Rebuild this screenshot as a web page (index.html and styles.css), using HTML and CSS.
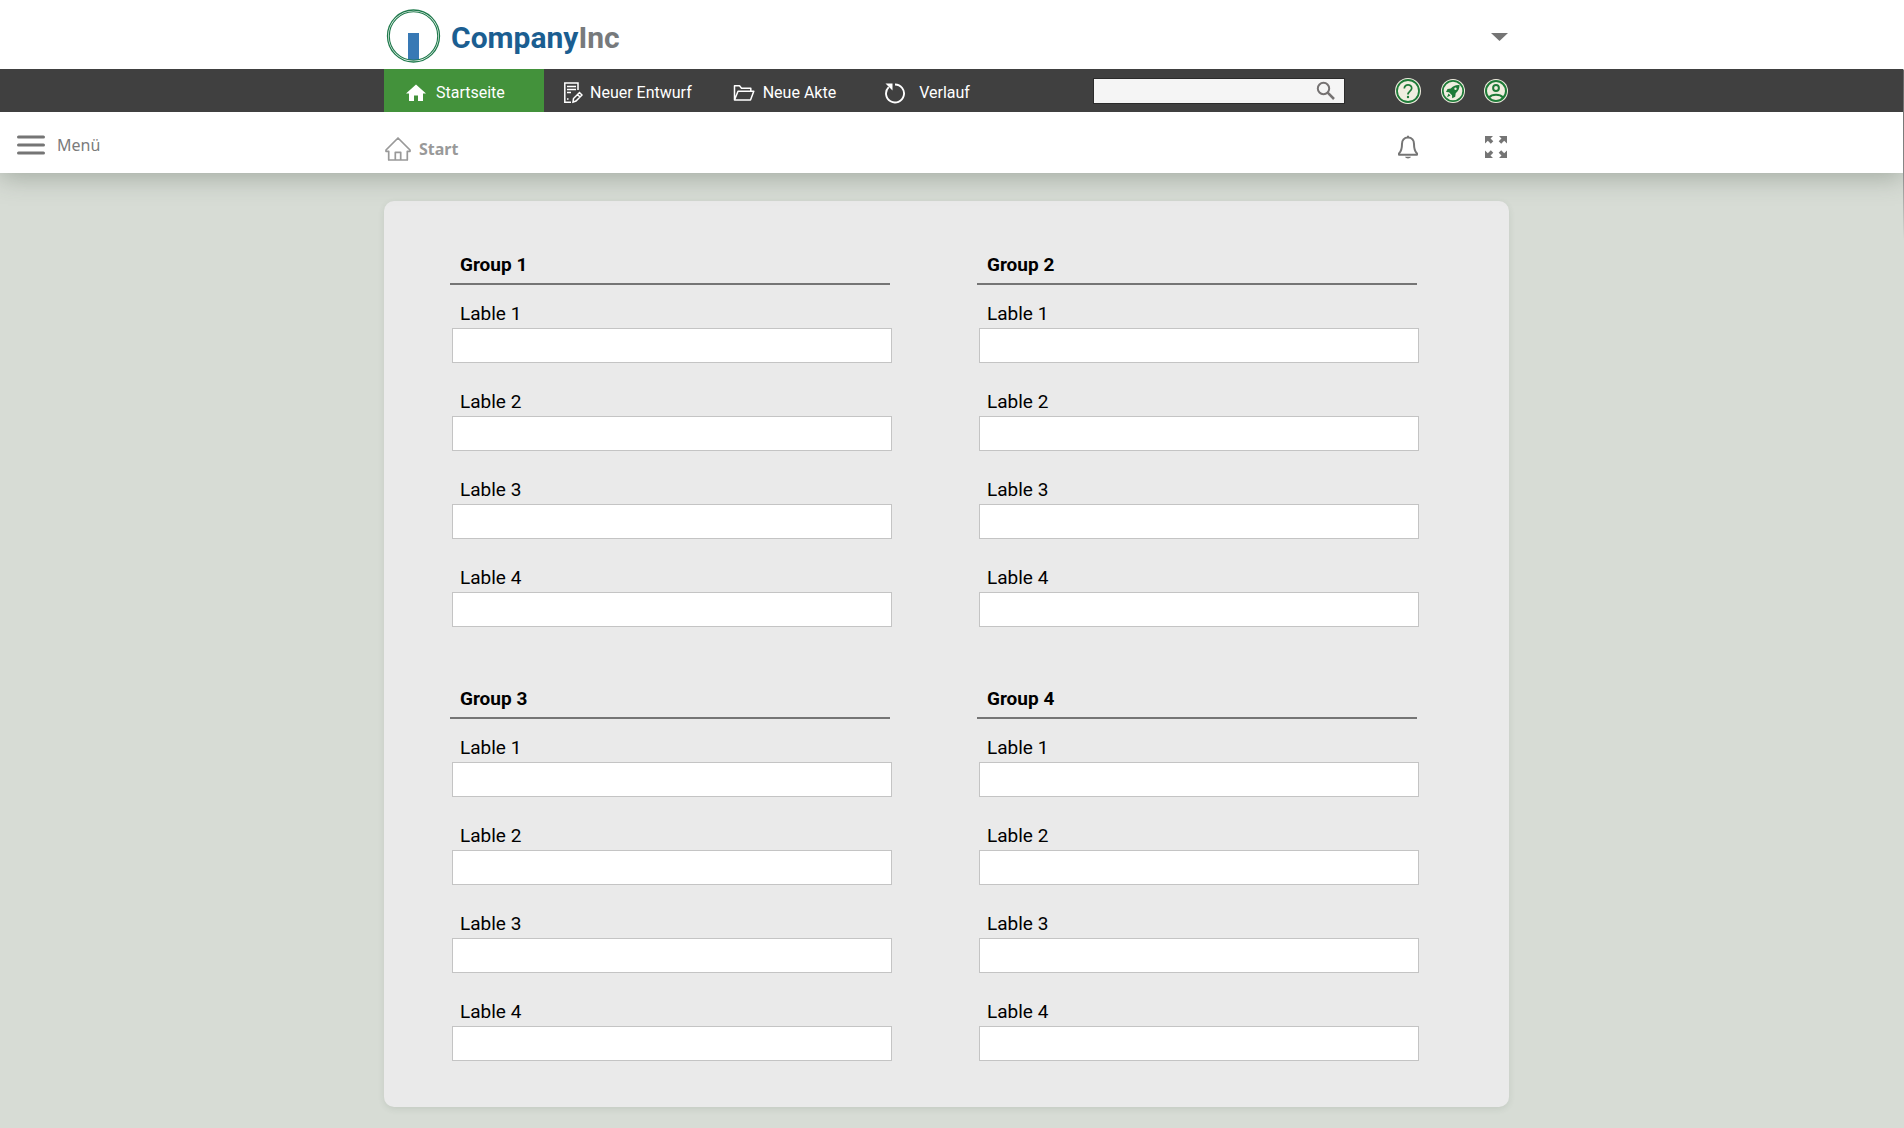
FILE: index.html
```html
<!DOCTYPE html>
<html lang="de">
<head>
<meta charset="utf-8">
<meta name="viewport" content="width=device-width, initial-scale=1">
<title>CompanyInc</title>
<link rel="stylesheet" href="styles.css">
</head>
<body>
<div class="page">
  <header class="head">
    <div class="frame brand-row">
      <div class="content brand-bar">
        <a class="brand" href="#">
          <svg class="logo" width="56" height="56" viewBox="0 0 56 56" aria-hidden="true">
            <rect x="23" y="25" width="11" height="27" fill="#3879b5"/>
            <circle cx="28.500" cy="28" r="26" fill="none" stroke="#1f7a4c" stroke-width="1.3"/>
            <circle cx="28.500" cy="28" r="24.2" fill="none" stroke="#1f7a4c" stroke-width="1.1"/>
          </svg>
          <span class="brand-name">Company<span class="brand-suffix">Inc</span></span>
        </a>
        <button class="icon-button" type="button" aria-label="Kopfbereich einklappen">
          <svg width="24" height="12" viewBox="0 0 24 12"><path d="M6 3h17l-8.500 8z" fill="#757575"/></svg>
        </button>
      </div>
    </div>

    <div class="frame nav-row">
      <div class="content nav-bar">
        <nav class="nav" aria-label="Hauptnavigation">
          <a class="nav-link active" href="#">
            <svg width="20" height="18" viewBox="0 0 20 18"><path d="M10 0.500L0 9.500h3V17h5v-5.500h4V17h5V9.500h3z" fill="#fff"/></svg>
            Startseite
          </a>
          <a class="nav-link draft" href="#">
            <svg width="20" height="22" viewBox="0 0 20 22" fill="none" stroke="#fff" stroke-width="1.500"><path d="M15 8V1H1.800v19.200H8M4 4.500h9M4 7.500h9M4 10.500h4M4 17h1.500M10 20.200l.5-3.700 6-6 2.500 2.500-6 6zM14.500 12.500l2.500 2.500"/></svg>
            Neuer Entwurf
          </a>
          <a class="nav-link file" href="#">
            <svg width="22" height="18" viewBox="0 0 22 18" fill="none" stroke="#fff" stroke-width="1.500" stroke-linejoin="round"><path d="M1.500 16V1.800h5l2 2.500h9.300v3M1.500 16L5 7.300h15.800L17.500 16z"/></svg>
            Neue Akte
          </a>
          <a class="nav-link history" href="#">
            <svg width="22" height="22" viewBox="0 0 22 22"><path d="M11 2.500a9 9 0 1 1-6.300 2.600" fill="none" stroke="#fff" stroke-width="1.900"/><path d="M1.500 1.500h7v7z" fill="#fff"/></svg>
            Verlauf
          </a>
        </nav>
        <form class="search" role="search">
          <input class="search-input" type="search" aria-label="Suche">
          <button class="icon-button" type="submit" aria-label="Suchen">
            <svg width="20" height="20" viewBox="0 0 20 20" fill="none" stroke="#757272"><circle cx="7.500" cy="7.500" r="5.700" stroke-width="2"/><path d="M11.700 11.700L18 18" stroke-width="2.500"/></svg>
          </button>
        </form>
        <div class="tools">
          <button class="icon-button" type="button" aria-label="Hilfe">
            <svg width="26" height="26" viewBox="0 0 26 26"><circle cx="13" cy="13" r="13" fill="#f0eee0"/><g fill="none" stroke="#1e7b38"><circle cx="13" cy="13" r="11" stroke-width="1.800"/><path d="M9.300 10.500c0-5 7.600-4.600 7.400-.3 0 2.800-3.700 3-3.700 6.300" stroke-width="1.700"/></g><circle cx="13" cy="19" r="1.200" fill="#1e7b38"/></svg>
          </button>
          <button class="icon-button" type="button" aria-label="Schnellstart">
            <svg width="24" height="24" viewBox="0 0 24 24"><circle cx="12" cy="12" r="12" fill="#f0eee0"/><circle cx="12" cy="12" r="10.200" fill="none" stroke="#1e7b38" stroke-width="1.700"/><path fill="#1e7b38" fill-rule="evenodd" d="M18.500 6c-4-.3-6.500 1-8.700 3.600L6.500 10 5 13l3 .2 3 3 .2 3 3-1.500.5-3.500C17.300 12 18.500 9.700 18.500 6zM14.500 8.600a1.200 1.200 0 1 1 0 2.400 1.200 1.200 0 0 1 0-2.400zM7.500 14.500l2 2-3.500 1.700z"/></svg>
          </button>
          <button class="icon-button" type="button" aria-label="Benutzerkonto">
            <svg width="24" height="24" viewBox="0 0 24 24"><circle cx="12" cy="12" r="12" fill="#f0eee0"/><g fill="none" stroke="#1e7b38" stroke-width="2"><circle cx="12" cy="12" r="10"/><circle cx="12" cy="9" r="2.900"/><path d="M5 18.500c3-3.700 11-3.700 14 0"/></g></svg>
          </button>
        </div>
      </div>
    </div>

    <div class="frame crumb-row">
      <button class="menu-button" type="button">
        <svg width="28" height="20" viewBox="0 0 28 20" stroke="#757575" stroke-width="3" stroke-linecap="round"><path d="M1.500 2h25M1.500 10h25M1.500 18h25"/></svg>
        Menü
      </button>
      <div class="content crumb-bar">
        <a class="crumb" href="#">
          <svg width="28" height="26" viewBox="0 0 28 26" fill="none" stroke="#999" stroke-width="1.700" stroke-linejoin="round"><path d="M14 2L2 14v1.300h2.700V24h18.600v-8.700H26V14zM11.300 24v-7.700h5.400V24"/></svg>
          Start
        </a>
        <div class="tools">
          <button class="icon-button" type="button" aria-label="Benachrichtigungen">
            <svg width="26" height="24" viewBox="-2 0 26 24"><path d="M11 2.500c-4 0-6 3-6 6.500 0 5-.3 7-3 9.500v1.200h18v-1.200c-2.700-2.500-3-4.500-3-9.500 0-3.500-2-6.500-6-6.500z" fill="none" stroke="#757575" stroke-width="2" stroke-linejoin="round"/><path d="M10 .8h2v2h-2zM8 21.800h6c-.8 2.200-5.200 2.200-6 0z" fill="#757575"/></svg>
          </button>
          <button class="icon-button" type="button" aria-label="Vollbild">
            <svg width="24" height="24" viewBox="0 0 24 24" fill="#757575"><path id="corner" d="M1 1h8L6.500 3.500 9.300 6.300 6.800 8.800 3.800 5.800 1 8.500z"/><use href="#corner" transform="matrix(-1 0 0 1 24 0)"/><use href="#corner" transform="matrix(1 0 0 -1 0 24)"/><use href="#corner" transform="matrix(-1 0 0 -1 24 24)"/></svg>
          </button>
        </div>
      </div>
    </div>
  </header>

  <main class="frame main">
    <form class="content panel">
      <section class="group">
        <h2 class="group-title">Group 1</h2>
        <div class="field"><label for="g1f1">Lable 1</label><input id="g1f1" type="text"></div>
        <div class="field"><label for="g1f2">Lable 2</label><input id="g1f2" type="text"></div>
        <div class="field"><label for="g1f3">Lable 3</label><input id="g1f3" type="text"></div>
        <div class="field"><label for="g1f4">Lable 4</label><input id="g1f4" type="text"></div>
      </section>
      <section class="group">
        <h2 class="group-title">Group 2</h2>
        <div class="field"><label for="g2f1">Lable 1</label><input id="g2f1" type="text"></div>
        <div class="field"><label for="g2f2">Lable 2</label><input id="g2f2" type="text"></div>
        <div class="field"><label for="g2f3">Lable 3</label><input id="g2f3" type="text"></div>
        <div class="field"><label for="g2f4">Lable 4</label><input id="g2f4" type="text"></div>
      </section>
      <section class="group">
        <h2 class="group-title">Group 3</h2>
        <div class="field"><label for="g3f1">Lable 1</label><input id="g3f1" type="text"></div>
        <div class="field"><label for="g3f2">Lable 2</label><input id="g3f2" type="text"></div>
        <div class="field"><label for="g3f3">Lable 3</label><input id="g3f3" type="text"></div>
        <div class="field"><label for="g3f4">Lable 4</label><input id="g3f4" type="text"></div>
      </section>
      <section class="group">
        <h2 class="group-title">Group 4</h2>
        <div class="field"><label for="g4f1">Lable 1</label><input id="g4f1" type="text"></div>
        <div class="field"><label for="g4f2">Lable 2</label><input id="g4f2" type="text"></div>
        <div class="field"><label for="g4f3">Lable 3</label><input id="g4f3" type="text"></div>
        <div class="field"><label for="g4f4">Lable 4</label><input id="g4f4" type="text"></div>
      </section>
    </form>
  </main>
</div>
</body>
</html>
```
FILE: styles.css
```css
* { box-sizing: border-box; }

body {
  margin: 0;
  background: #d7dcd5;
  font-family: Roboto, "Liberation Sans", sans-serif;
  font-size: 16px;
  color: #000;
}

a { color: inherit; text-decoration: none; }
svg { display: block; flex: none; }

/* A thin line runs down the right edge and fades out below the header. */
.page {
  min-height: 100vh;
  padding-right: 1px;
  background: linear-gradient(#fff 69px, #666 70px, #888 170px, #d7dcd5 240px) right top / 1px 100% no-repeat;
}

.frame {
  display: grid;
  grid-template-columns: minmax(120px, 384fr) minmax(0, 1125px) minmax(0, 394fr);
}
.content { grid-column: 2; }

.head {
  background: #fff;
  box-shadow: 0 4px 24px rgba(60, 75, 60, 0.35);
  clip-path: inset(0 0 -40px 0);
}

.icon-button {
  display: block;
  padding: 0;
  border: 0;
  background: none;
  cursor: pointer;
}

.brand-bar {
  display: flex;
  align-items: center;
  justify-content: space-between;
  height: 69px;
  padding: 2px 0 0 1px;
}
.brand { display: flex; align-items: center; gap: 10px; }
.brand-name {
  font-size: 30px;
  font-weight: 700;
  line-height: 36px;
  color: #1b5e91;
  padding-top: 4px;
}
.brand-suffix { color: #777a7c; }

.nav-row { background: #404040; }
.nav-bar { display: flex; align-items: center; height: 43px; }
.nav { display: flex; align-self: stretch; color: #fff; }
.nav-link { display: flex; align-items: center; gap: 8px; padding-top: 4px; }
.nav-link.active {
  width: 160px;
  gap: 10px;
  padding-left: 22px;
  background: #43923b;
}
.nav-link.draft { padding-left: 19px; gap: 7px; }
.nav-link.file { padding-left: 41px; }
.nav-link.history { padding-left: 48px; gap: 13px; }

.search {
  display: flex;
  align-items: center;
  width: 252px;
  height: 26px;
  margin-left: auto;
  padding-right: 8px;
  border: 1px solid #2b2b2b;
  background: #f5f5f5;
}
.search-input {
  flex: 1;
  min-width: 0;
  border: 0;
  padding: 0 8px;
  background: none;
  font: inherit;
}
.tools {
  display: flex;
  align-items: center;
  justify-content: space-between;
  width: 114px;
  padding-right: 1px;
}
.nav-bar .tools { margin-left: 50px; }

.crumb-row { height: 61px; }
.menu-button {
  display: flex;
  align-items: center;
  gap: 12px;
  padding: 5px 0 0 17px;
  border: 0;
  background: none;
  font: 16px "Noto Sans", "Open Sans", sans-serif;
  color: #7b7b7b;
  cursor: pointer;
}
.crumb-bar {
  display: flex;
  align-items: center;
  justify-content: space-between;
  padding-top: 8px;
}
.crumb {
  display: flex;
  align-items: center;
  gap: 7px;
  padding-top: 4px;
  font: 700 16px "Noto Sans", "Open Sans", sans-serif;
  color: #999;
}

.panel {
  display: grid;
  grid-template-columns: 1fr 1fr;
  gap: 58px 87px;
  margin: 28px 0 21px;
  padding: 50px 92px 46px 66px;
  border-radius: 10px;
  background: #eaeaea;
  box-shadow: 0 2px 6px rgba(60, 80, 60, 0.12);
}
.group { display: grid; gap: 25px; }
.group-title {
  margin: 0 0 -10px;
  padding: 0 10px 5px;
  border-bottom: 2px solid #757575;
  font-size: 19px;
  line-height: 27px;
}
.field { display: grid; }
.field label { padding-left: 10px; font-size: 19px; line-height: 28px; }
.field input {
  width: 100%;
  height: 35px;
  margin-left: 2px;
  padding: 0 8px;
  border: 1px solid #c4c4c4;
  background: #fff;
  font: inherit;
}
```
